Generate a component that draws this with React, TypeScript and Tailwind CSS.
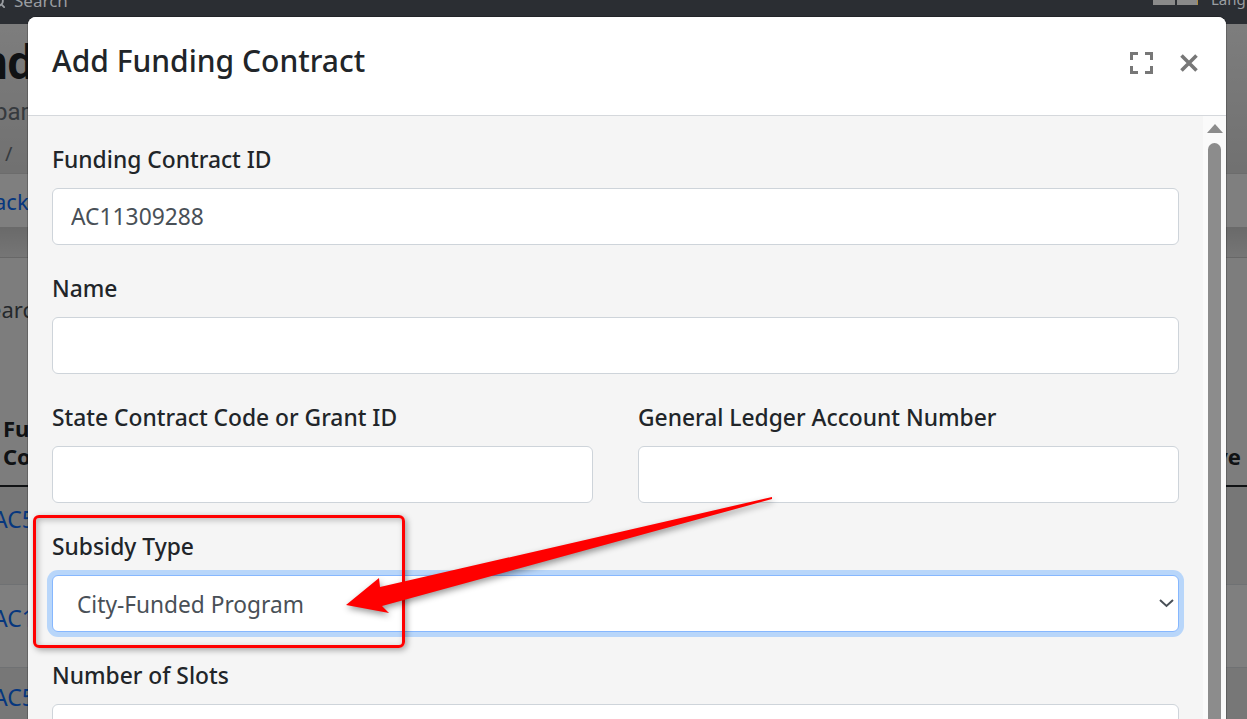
import { Search } from 'lucide-react'

const sans = "font-['Noto_Sans',sans-serif]"

function Field({ label, value = '' }: { label: string; value?: string }) {
  return (
    <div className="mb-[29px]">
      <label className="block h-[30px] mb-[13px] text-[22.8px] leading-[30px] font-medium text-[#212529] whitespace-nowrap">
        {label}
      </label>
      <input
        type="text"
        value={value}
        readOnly
        className="block w-full h-[57px] px-[18px] bg-white border border-[#ced4da] rounded-md text-[22.8px] text-[#495057] outline-none"
      />
    </div>
  )
}

function BackgroundPage() {
  return (
    <div className={`absolute inset-0 flex flex-col bg-[#f5f5f5] ${sans}`}>
      {/* Page behind the modal, scrolled sideways so only the edges show */}
      <div className="h-[174px] border-b border-[#d8d8d8] overflow-hidden pt-[24px] bg-gradient-to-b from-[#ffffff] to-[#e2e2e2]">
        <h1 className="-ml-[72px] mt-[11px] h-[56px] text-[48px] leading-[56px] font-bold text-[#212529] whitespace-nowrap font-['Roboto',sans-serif]">
          Funding
        </h1>
        <p className="-ml-[6px] mt-[5px] text-[24px] leading-[32px] text-[#6c757d] whitespace-nowrap font-['Roboto',sans-serif]">
          bar
        </p>
        <p className="ml-[5px] mt-[12px] text-[20px] leading-[28px] text-[#6c757d]">/</p>
      </div>
      <div className="h-[53px] bg-white flex items-center pt-[2px] overflow-hidden">
        <span className="-ml-[6px] text-[22px] text-[#0d6efd] whitespace-nowrap">ack</span>
      </div>
      <div className="h-[30px] bg-gradient-to-b from-[#d4d4d4] to-[#ececec]" />
      <div className="h-[228px] border-t border-[#cfcfcf] bg-[#fbfbfb] pt-[37px] flex flex-col justify-between overflow-hidden">
        <span className="-ml-[11px] text-[22px] leading-[28px] text-[#495057] whitespace-nowrap">earch</span>
        <div className="flex justify-between items-end text-[22px] leading-[28px] font-bold text-[#212529] pl-[3px] pr-[6px] pb-[15px]">
          <span>
            Fun
            <br />
            Co
          </span>
          <span>ve</span>
        </div>
      </div>
      <div className="h-[99px] bg-[#eeeeee] border-t-2 border-[#212529] flex pt-[17px] overflow-hidden">
        <span className="-ml-[7px] text-[23px] leading-[30px] text-[#0d6efd]">AC5</span>
      </div>
      <div className="h-[83px] bg-white border-t border-[#dee2e6] flex pt-[18px] overflow-hidden">
        <span className="-ml-[7px] text-[23px] leading-[30px] text-[#0d6efd]">AC1</span>
      </div>
      <div className="flex-1 bg-[#eeeeee] border-t border-[#dee2e6] flex pt-[14px] overflow-hidden">
        <span className="-ml-[7px] text-[23px] leading-[30px] text-[#0d6efd]">AC5</span>
      </div>
    </div>
  )
}

function Navbar() {
  return (
    <div className={`absolute inset-x-0 top-0 z-10 h-[24px] bg-[#2b2e33] overflow-hidden ${sans}`}>
      <div className="absolute -top-[9px] left-0 flex items-center text-[17px] leading-[20px] text-[#9a9da1]">
        <Search size={15} strokeWidth={3} className="-ml-[9px] mr-[8px]" />
        <span>Search</span>
      </div>
      <div className="absolute top-0 left-[1153px] flex gap-[2px]">
        <div className="w-[22px] h-[5px] bg-[#8a8a8a]" />
        <div className="w-[21px] h-[5px] bg-[#8a8a8a] border-r border-[#b08a3a]" />
      </div>
      <span className="absolute -top-[11px] left-[1211px] text-[15px] leading-[20px] text-[#9a9da1]">Lang</span>
    </div>
  )
}

function ModalHeader() {
  return (
    <div className="h-[99px] shrink-0 flex items-center justify-between pl-[24px] pr-[28px] pb-[10px] border-b border-[#d5d8dc] bg-white rounded-t-lg">
      <h5 className="text-[30px] leading-[36px] font-medium text-[#212529] whitespace-nowrap">Add Funding Contract</h5>
      <div className="flex items-center gap-[27px] pt-[3px]">
        <svg width="23" height="22" viewBox="0 0 23 22" fill="none" stroke="#777777" strokeWidth="3">
          <path d="M1.5 8V1.5H8M15 1.5H21.5V8M21.5 14V20.5H15M8 20.5H1.5V14" />
        </svg>
        <svg width="18" height="18" viewBox="0 0 18 18" fill="none" stroke="#777777" strokeWidth="3.6">
          <path d="M1.5 1.5L16.5 16.5M16.5 1.5L1.5 16.5" />
        </svg>
      </div>
    </div>
  )
}

function Scrollbar() {
  return (
    <div className="w-[23px] shrink-0 bg-[#fafafa] flex flex-col items-center pt-[8px]">
      <svg width="16" height="9" viewBox="0 0 16 9" fill="#8c8c8c">
        <path d="M8 0L16 9H0Z" />
      </svg>
      <div className="mt-[10px] w-[13px] flex-1 rounded-t-full bg-[#8c8c8c]" />
    </div>
  )
}

function AddFundingContractModal() {
  return (
    <div className="absolute left-[28px] top-[17px] z-20 w-[1198px] h-[720px] flex flex-col bg-white rounded-t-lg shadow-[0_0_0_1px_rgba(0,0,0,0.2)]">
      <ModalHeader />
      <div className="flex-1 flex bg-[#f5f5f5] min-h-0">
        <div className="flex-1 px-[24px] pt-[29px] overflow-hidden">
          <Field label="Funding Contract ID" value="AC11309288" />
          <Field label="Name" />
          <div className="grid grid-cols-2 gap-[45px]">
            <Field label="State Contract Code or Grant ID" />
            <Field label="General Ledger Account Number" />
          </div>
          <div className="mb-[29px]">
            <label className="block h-[30px] mb-[13px] text-[22.8px] leading-[30px] font-medium text-[#212529]">
              Subsidy Type
            </label>
            <div className="relative">
              <select
                defaultValue="city"
                className="block w-full h-[57px] pl-[24px] pt-[3px] appearance-none bg-white border border-[#86b7fe] rounded-md text-[22.7px] text-[#495057] outline-none shadow-[0_0_0_5px_#b8d6fa]"
              >
                <option value="city">City-Funded Program</option>
              </select>
              <svg
                width="15"
                height="10"
                viewBox="0 0 15 10"
                fill="none"
                stroke="#495057"
                strokeWidth="2"
                className="absolute right-[5px] top-[23px]"
              >
                <path d="M1 2L7.5 8L14 2" />
              </svg>
            </div>
          </div>
          <Field label="Number of Slots" />
        </div>
        <Scrollbar />
      </div>
    </div>
  )
}

export default function App() {
  return (
    <div className="relative w-[1247px] h-[719px] overflow-hidden bg-[#f5f5f5]">
      <BackgroundPage />
      <div className="absolute inset-0 bg-black/50" />
      <Navbar />
      <AddFundingContractModal />
      {/* Annotation drawn on top of the screenshot */}
      <div className="absolute z-30 left-[33px] top-[515px] w-[372px] h-[133px] border-[3px] border-[#ff0000] rounded-[6px] shadow-[2px_2px_6px_rgba(0,0,0,0.35),inset_2px_2px_6px_rgba(0,0,0,0.25)]" />
      <svg
        width="1247"
        height="719"
        viewBox="0 0 1247 719"
        className="absolute z-30 left-0 top-0 drop-shadow-[1px_3px_3px_rgba(0,0,0,0.4)]"
      >
        <path d="M772 497L380 587L379 578L346 605L389 613L382 606L772 499Z" fill="#ff0000" />
      </svg>
    </div>
  )
}
